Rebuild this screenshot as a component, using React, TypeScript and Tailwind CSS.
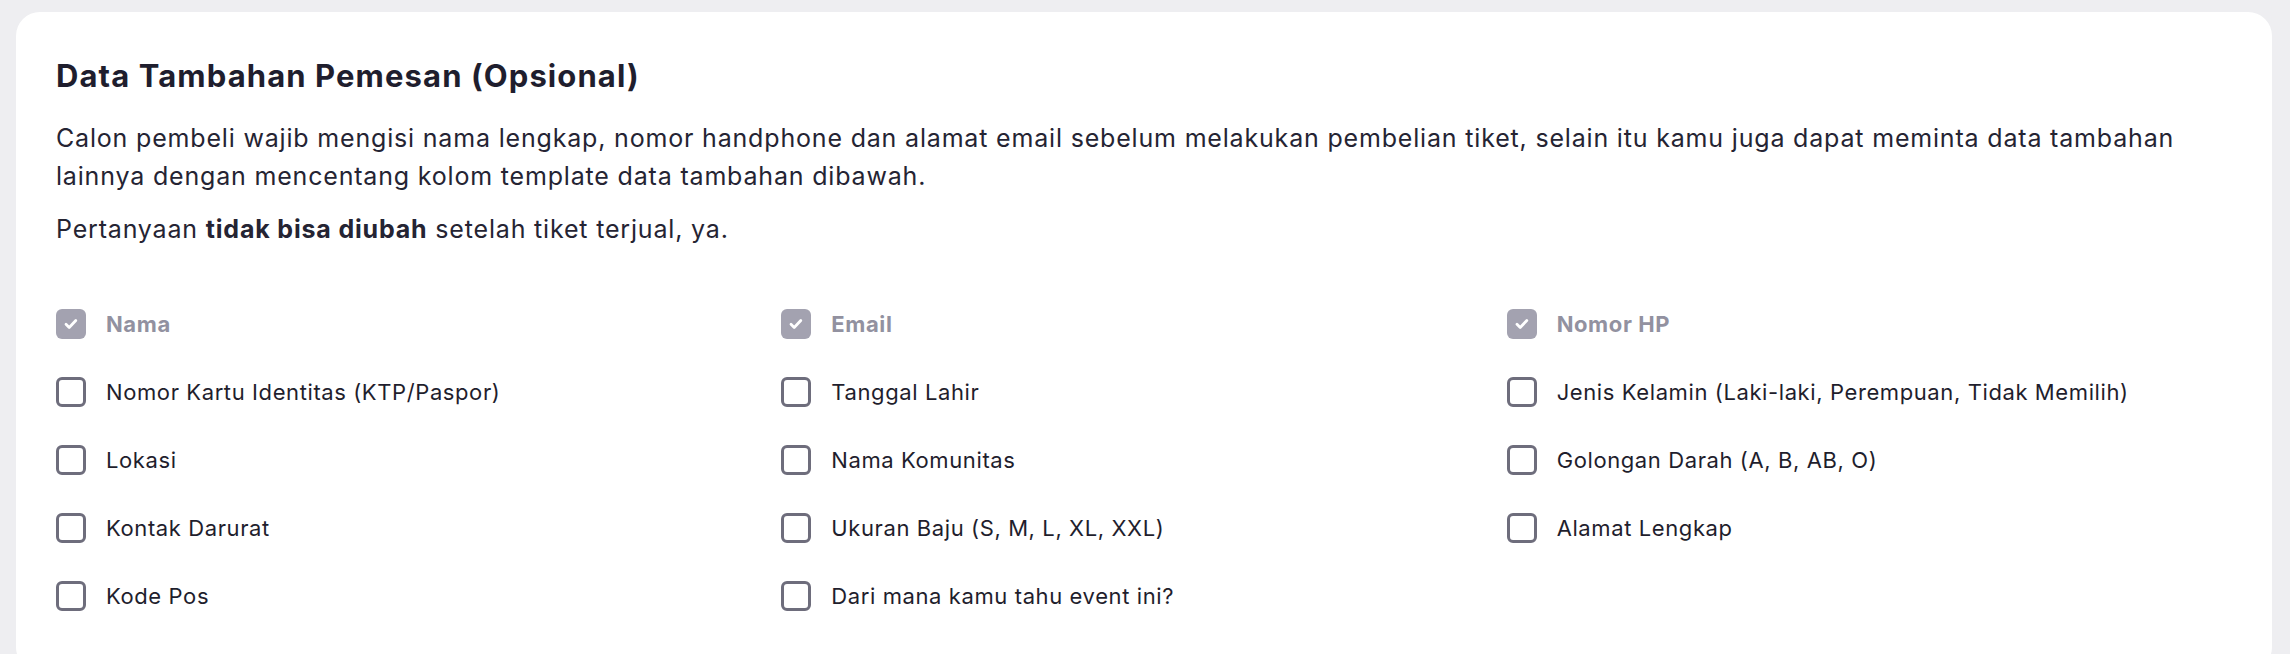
import React from "react";

type Field = { label: string; locked?: boolean };

const columns: Field[][] = [
  [
    { label: "Nama", locked: true },
    { label: "Nomor Kartu Identitas (KTP/Paspor)" },
    { label: "Lokasi" },
    { label: "Kontak Darurat" },
    { label: "Kode Pos" },
  ],
  [
    { label: "Email", locked: true },
    { label: "Tanggal Lahir" },
    { label: "Nama Komunitas" },
    { label: "Ukuran Baju (S, M, L, XL, XXL)" },
    { label: "Dari mana kamu tahu event ini?" },
  ],
  [
    { label: "Nomor HP", locked: true },
    { label: "Jenis Kelamin (Laki-laki, Perempuan, Tidak Memilih)" },
    { label: "Golongan Darah (A, B, AB, O)" },
    { label: "Alamat Lengkap" },
  ],
];

const CheckItem = ({ label, locked }: Field) => {
  if (locked) {
    return (
      <label className="flex items-center gap-[20px] h-[30px]">
        <span className="flex items-center justify-center w-[30px] h-[30px] rounded-[6px] bg-[#a3a2b0]">
          <svg width="20" height="20" viewBox="0 0 20 20" fill="none">
            <path d="M5 10.3l3.2 3.2 6.6-7" stroke="white" strokeWidth="2.8" strokeLinecap="round" strokeLinejoin="round" />
          </svg>
        </span>
        <span className="text-[22px] tracking-[0.6px] font-bold text-[#9291a0]">{label}</span>
      </label>
    );
  }
  return (
    <label className="flex items-center gap-[20px] h-[30px]">
      <span className="w-[30px] h-[30px] rounded-[6px] border-[3px] border-[#6e6d7c] bg-white" />
      <span className="text-[22px] tracking-[0.6px] text-[#1f1e2d]">{label}</span>
    </label>
  );
};

const App = () => {
  return (
    <div className="min-h-screen bg-[#eeeef1] pt-[12px] pl-[16px] pr-[18px] font-['Inter',sans-serif] overflow-hidden h-[654px]">
      <div className="bg-white rounded-[24px] px-[40px] pt-[46px] pb-[60px]">
        <h2 className="text-[31px] leading-[36px] tracking-[1.1px] font-bold text-[#1f1e2e]">
          Data Tambahan Pemesan (Opsional)
        </h2>
        <p className="mt-[25px] text-[25px] leading-[38px] tracking-[0.82px] text-[#252433]">
          Calon pembeli wajib mengisi nama lengkap, nomor handphone dan alamat email sebelum melakukan pembelian tiket, selain itu kamu juga dapat meminta data tambahan lainnya dengan mencentang kolom template data tambahan dibawah.
        </p>
        <p className="mt-[15px] text-[25px] leading-[38px] tracking-[0.82px] text-[#252433]">
          Pertanyaan <span className="font-bold">tidak bisa diubah</span> setelah tiket terjual, ya.
        </p>
        <div className="mt-[61px] grid grid-cols-3">
          {columns.map((col, i) => (
            <div key={i} className="flex flex-col gap-[38px]">
              {col.map((f) => (
                <CheckItem key={f.label} {...f} />
              ))}
            </div>
          ))}
        </div>
      </div>
    </div>
  );
};

export default App;
